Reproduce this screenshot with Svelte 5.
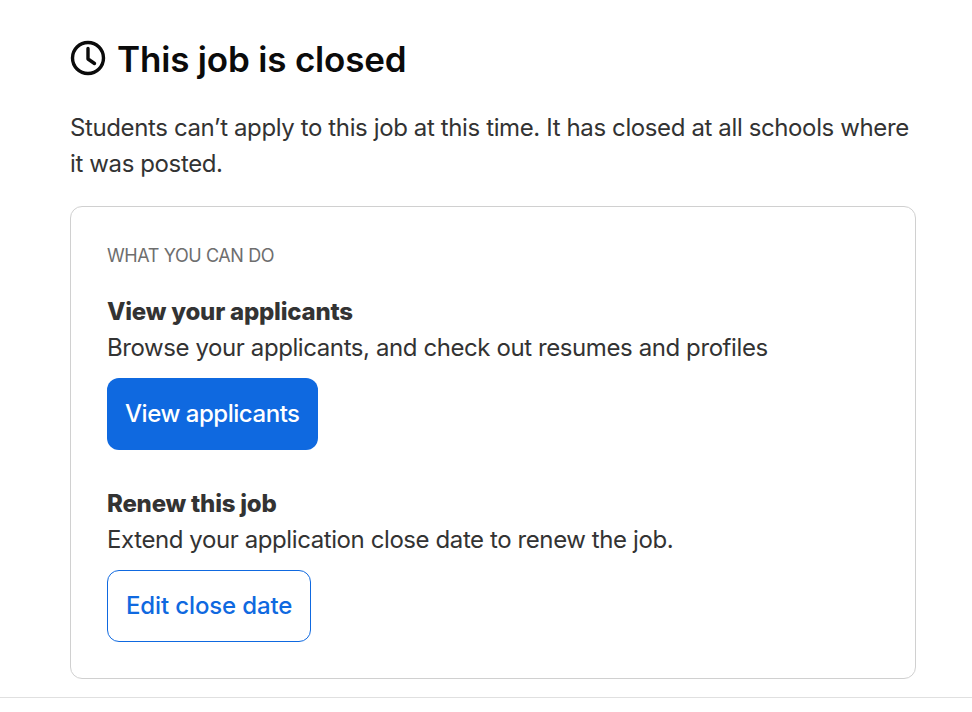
<svelte:options runes />

<script lang="ts">
  const actions = [
    {
      title: 'View your applicants',
      text: 'Browse your applicants, and check out resumes and profiles',
      label: 'View applicants',
      kind: 'primary'
    },
    {
      title: 'Renew this job',
      text: 'Extend your application close date to renew the job.',
      label: 'Edit close date',
      kind: 'outline'
    }
  ];
</script>

<div class="page">
  <section class="content">
    <h1>
      <svg class="clock" viewBox="0 0 36 36" aria-hidden="true">
        <circle cx="18" cy="18" r="15.5" />
        <polyline points="18,8.5 18,19 24.5,23.5" />
      </svg>
      This job is closed
    </h1>
    <p class="lead">
      Students can’t apply to this job at this time. It has closed at all schools where it was posted.
    </p>
    <div class="card">
      <div class="eyebrow">WHAT YOU CAN DO</div>
      {#each actions as action}
        <div class="action">
          <h2>{action.title}</h2>
          <p>{action.text}</p>
          <button class={action.kind}>{action.label}</button>
        </div>
      {/each}
    </div>
  </section>
  <hr />
</div>

<style>
  :global(body) {
    margin: 0;
    background: #fff;
  }
  .page {
    font-family: Inter, "Liberation Sans", sans-serif;
    color: #333;
    height: 712px;
    overflow: hidden;
  }
  .content {
    padding: 37px 56px 0 70px;
  }
  h1 {
    display: flex;
    align-items: center;
    gap: 11px;
    margin: 0;
    font-size: 35px;
    line-height: 44px;
    font-weight: 600;
    letter-spacing: -0.18px;
    color: #0b0b0b;
  }
  .clock {
    width: 36px;
    height: 36px;
    margin-bottom: 2px;
    flex: none;
    fill: none;
    stroke: #0b0b0b;
    stroke-width: 3.4;
    stroke-linecap: round;
    stroke-linejoin: round;
  }
  .lead {
    margin: 29px 0 0;
    font-size: 24px;
    line-height: 36px;
    letter-spacing: -0.38px;
  }
  .card {
    box-sizing: border-box;
    height: 473px;
    margin-top: 24px;
    padding: 37px 36px 0;
    border: 1px solid #d0d0d0;
    border-radius: 12px;
  }
  .eyebrow {
    font-size: 18px;
    line-height: 24px;
    letter-spacing: -0.4px;
    color: #6e6e6e;
  }
  .action {
    margin-top: 26px;
  }
  .action + .action {
    margin-top: 36px;
  }
  h2 {
    margin: 0;
    font-size: 24px;
    line-height: 36px;
    font-weight: 800;
    letter-spacing: -0.22px;
    color: #333;
  }
  .action p {
    margin: 0;
    font-size: 24px;
    line-height: 36px;
    letter-spacing: -0.41px;
  }
  button {
    display: block;
    box-sizing: border-box;
    height: 72px;
    margin-top: 12px;
    padding-bottom: 2px;
    font-family: inherit;
    font-size: 24px;
    font-weight: 500;
    border-radius: 12px;
    cursor: pointer;
  }
  .primary {
    padding-inline: 18px;
    background: #0f69e0;
    border: none;
    color: #fff;
    letter-spacing: -0.46px;
  }
  .outline {
    padding-inline: 18px;
    background: #fff;
    border: 1px solid #0f69e0;
    color: #0f69e0;
    letter-spacing: -0.13px;
  }
  hr {
    margin: 18px 0 0;
    border: none;
    border-top: 1px solid #e0e0e0;
  }
</style>
